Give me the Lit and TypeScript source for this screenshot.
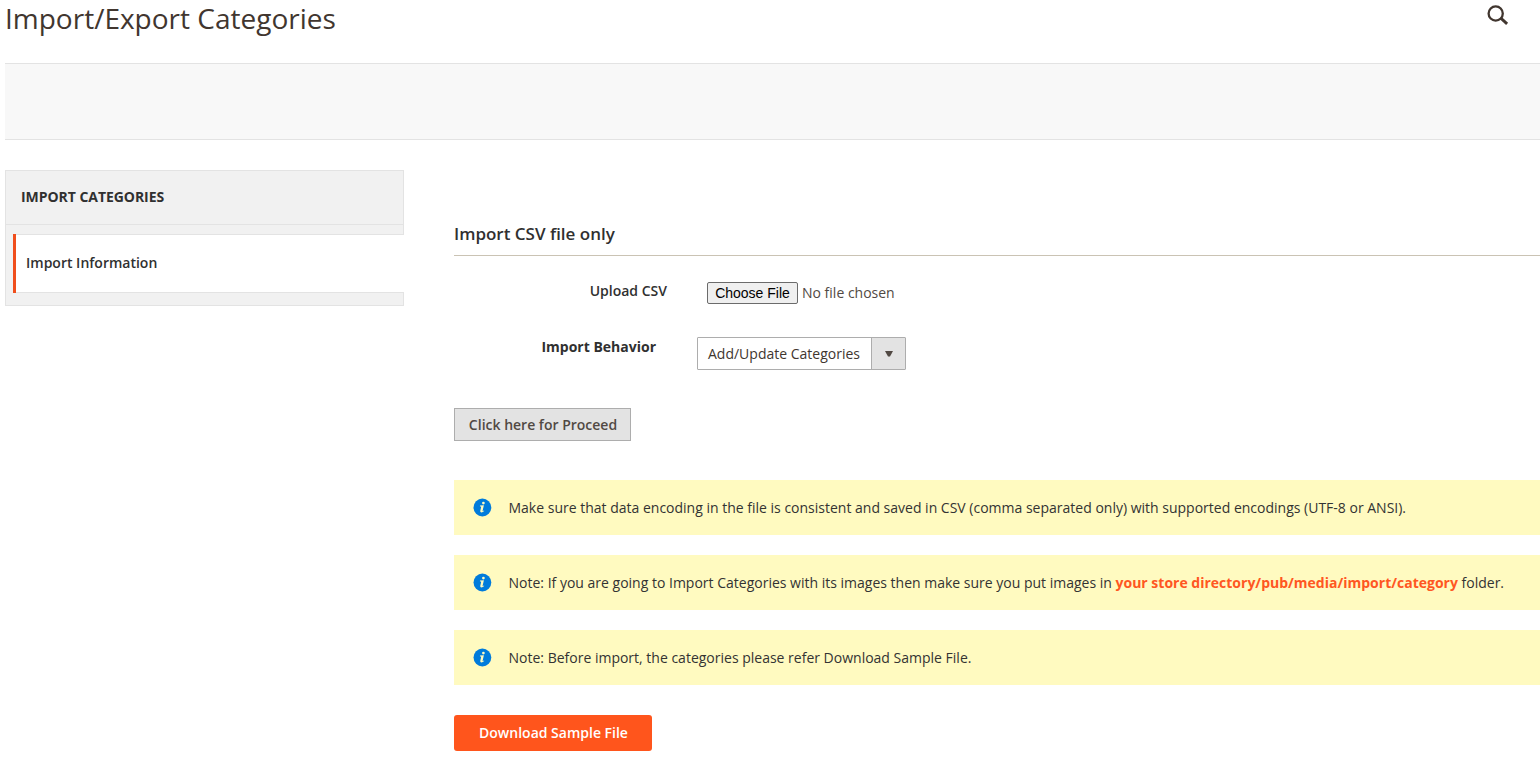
import { LitElement, html, css, svg } from "lit";
import { customElement } from "lit/decorators.js";

const searchIcon = html`<svg class="search" viewBox="0 0 22 22" width="22" height="22">
  <circle cx="8.7" cy="8.5" r="7.1" fill="none" stroke="#41362f" stroke-width="2.3" />
  <path d="M13.8 13.2 L20.1 18.9" stroke="#41362f" stroke-width="2.9" fill="none" />
</svg>`;

@customElement("info-message")
export class InfoMessage extends LitElement {
  static styles = css`
    :host { display: block; }
    .message {
      display: flex;
      align-items: center;
      height: 55px;
      padding-left: 19px;
      box-sizing: border-box;
      background: #fffac0;
      color: #333;
      font-size: 14px;
      line-height: 19px;
      white-space: nowrap;
    }
    .icon { display: block; flex: none; width: 19px; height: 19px; margin-right: 16.5px; }
  `;
  render() {
    return html`<div class="message">
      <svg class="icon" viewBox="0 0 19 19">
        ${svg`<circle cx="9.4" cy="9.5" r="8.9" fill="#007bdb" />
        <circle cx="10.4" cy="5.1" r="1.35" fill="#fffac0" />
        <path d="M7 7.6 L10.9 7.2 L9.6 12.7 Q9.5 13.3 10 13.1 L11 12.5 L11.2 13 Q9.9 14.4 8.4 14.4 Q6.9 14.3 7.3 12.7 L8.2 8.7 L6.9 8.3 Z" fill="#fffac0" />`}
      </svg>
      <span><slot></slot></span>
    </div>`;
  }
}

@customElement("app-root")
export class AppRoot extends LitElement {
  static styles = css`
    :host {
      display: block;
      height: 772px;
      overflow: hidden;
      background: #fff;
      color: #303030;
      font-family: "Open Sans", "Noto Sans", sans-serif;
      font-size: 14px;
      line-height: 19px;
      padding-left: 5px;
      box-sizing: border-box;
    }
    .header { display: flex; justify-content: space-between; height: 63px; }
    .title { margin: 0; font-size: 28px; font-weight: 400; line-height: 36px; color: #41362f; }
    .search { display: block; margin: 5px 31px 0 0; }
    .toolbar {
      height: 77px;
      box-sizing: border-box;
      background: #f8f8f8;
      border-top: 1px solid #e3e3e3;
      border-bottom: 1px solid #e3e3e3;
    }
    .page { display: grid; grid-template-columns: 399px 1fr; column-gap: 50px; padding-top: 30px; align-items: start; }
    .nav { background: #f1f1f1; height: 136px; display: flex; flex-direction: column; }
    .nav-title {
      height: 55px;
      box-sizing: border-box;
      border: 1px solid #e3e3e3;
      padding: 16px 15px 0;
      font-weight: 700;
      letter-spacing: -0.05px;
      text-transform: uppercase;
    }
    .nav-gap { height: 9px; border: solid #e3e3e3; border-width: 0 1px; }
    .nav-item {
      height: 59px;
      box-sizing: border-box;
      border-left: 1px solid #e3e3e3;
      padding-left: 7px;
      display: flex;
    }
    .marker { width: 3px; background: #f04e1c; }
    .nav-link {
      flex: 1;
      box-sizing: border-box;
      background: #fff;
      border: solid #e3e3e3;
      border-width: 1px 0;
      padding: 18px 10px 0;
      font-weight: 600;
    }
    .nav-end { flex: 1; border: solid #e3e3e3; border-width: 0 1px 1px; }
    .section {
      margin: 52px 0 0;
      height: 34px;
      box-sizing: border-box;
      border-bottom: 1px solid #cac3b4;
      font-size: 17px;
      line-height: 23px;
      font-weight: 600;
    }
    .row { display: flex; align-items: flex-start; }
    .row-file { height: 55px; padding-top: 25px; box-sizing: border-box; }
    .row-behavior { height: 97px; padding-top: 26px; box-sizing: border-box; }
    .label { text-align: right; font-weight: 600; }
    .label-file { width: 213px; margin-right: 40px; }
    .label-behavior { width: 202px; margin-right: 41px; font-weight: 700; }
    .file { font: 14px "Open Sans", sans-serif; color: #514943; width: 230px; height: 22px; padding: 0; margin: 1px 0 0; line-height: 22px; }
    .file::file-selector-button {
      font: 14px "Liberation Sans", Arial, sans-serif;
      height: 22px;
      width: 91px;
      box-sizing: border-box;
      padding: 0;
      margin: 0 4px 0 0;
      border: 1px solid #6b6b6b;
      border-radius: 2px;
      background: #efefef;
      color: #000;
    }
    .select {
      display: flex;
      width: 209px;
      height: 33px;
      box-sizing: border-box;
      border: 1px solid #adadad;
      border-radius: 1px;
      color: #41362f;
    }
    .select-value { flex: 1; padding: 6px 0 0 10px; white-space: nowrap; }
    .select-arrow {
      width: 33px;
      border-left: 1px solid #adadad;
      background: #e3e3e3;
      display: flex;
      align-items: center;
      justify-content: center;
    }
    .button {
      display: block;
      box-sizing: border-box;
      font: 600 14px/19px "Open Sans", sans-serif;
      margin: 0;
      padding: 0 0 0 1px;
      white-space: nowrap;
    }
    .proceed { width: 177px; height: 33px; margin-bottom: 39px; border: 1px solid #adadad; background: #e3e3e3; color: #514943; }
    .messages { display: flex; flex-direction: column; gap: 20px; margin-bottom: 30px; }
    .path { color: #ff5722; font-weight: 700; }
    .download { width: 198px; height: 36px; padding-bottom: 1px; border: 0; border-radius: 3px; background: #ff551c; color: #fff; }
  `;

  render() {
    return html`
      <header class="header">
        <h1 class="title">Import/Export Categories</h1>
        ${searchIcon}
      </header>
      <div class="toolbar"></div>
      <div class="page">
        <nav class="nav">
          <div class="nav-title">Import Categories</div>
          <div class="nav-gap"></div>
          <div class="nav-item"><div class="marker"></div><div class="nav-link">Import Information</div></div>
          <div class="nav-end"></div>
        </nav>
        <main>
          <h2 class="section">Import CSV file only</h2>
          <div class="row row-file">
            <label class="label label-file">Upload CSV</label>
            <input class="file" type="file" />
          </div>
          <div class="row row-behavior">
            <label class="label label-behavior">Import Behavior</label>
            <div class="select">
              <span class="select-value">Add/Update Categories</span>
              <span class="select-arrow"><svg width="8" height="6" viewBox="0 0 8 6"><path d="M0 0H8L5 5.4H3Z" fill="#514943" /></svg></span>
            </div>
          </div>
          <button class="button proceed">Click here for Proceed</button>
          <div class="messages">
            <info-message>Make sure that data encoding in the file is consistent and saved in CSV (comma separated only) with supported encodings (UTF-8 or ANSI).</info-message>
            <info-message>Note: If you are going to Import Categories with its images then make sure you put images in <span class="path">your store directory/pub/media/import/category</span> folder.</info-message>
            <info-message>Note: Before import, the categories please refer Download Sample File.</info-message>
          </div>
          <button class="button download">Download Sample File</button>
        </main>
      </div>
    `;
  }
}
